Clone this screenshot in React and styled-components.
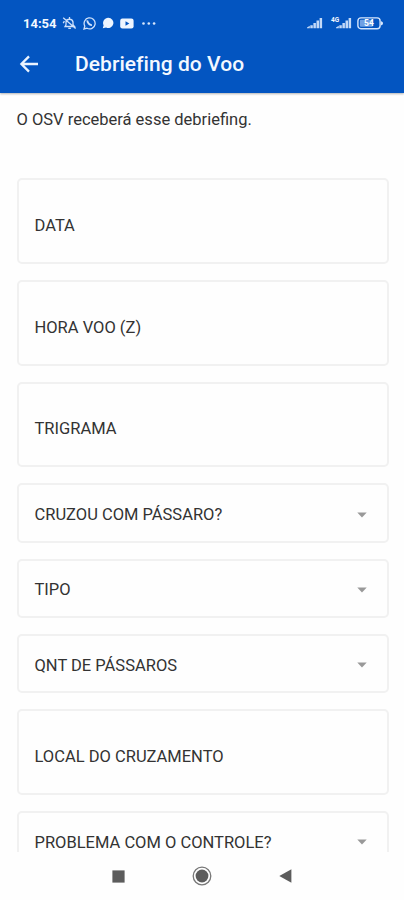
import styled, { createGlobalStyle } from "styled-components";

const fields = [
  { label: "DATA" },
  { label: "HORA VOO (Z)" },
  { label: "TRIGRAMA" },
  { label: "CRUZOU COM PÁSSARO?", select: true },
  { label: "TIPO", select: true },
  { label: "QNT DE PÁSSAROS", select: true },
  { label: "LOCAL DO CRUZAMENTO" },
  { label: "PROBLEMA COM O CONTROLE?", select: true },
];

const MutedBellIcon = () => (
  <svg width="15" height="14" viewBox="0 0 15 14" fill="none" stroke="#cfe1fb" strokeWidth="1.3">
    <path d="M3 10.5h9.5L11 8.8V6a3.6 3.6 0 0 0-7 0v2.8zM6.3 12.4h2.6M7.5 2.4V1M1.2 1.8l12.4 10.8M1.2 7.2l1.2-2" />
  </svg>
);

const WhatsAppIcon = () => (
  <svg width="13" height="14" viewBox="0 0 13 14" fill="none" stroke="#cfe1fb" strokeWidth="1.3">
    <path d="M1 13l.8-3A5.5 5.5 0 1 1 4 12.2z" />
    <path d="M4.5 4.4c-.6 2 2.3 5 4.4 4.5" strokeWidth="2" />
  </svg>
);

const ChatIcon = () => (
  <svg width="12" height="12" viewBox="0 0 12 12" fill="#eef5ff">
    <path d="M6.3.8a5.1 5.1 0 1 1-2.2 9.7L.8 11.2l.8-3A5.1 5.1 0 0 1 6.3.8z" />
  </svg>
);

const VideoIcon = () => (
  <svg width="14" height="11" viewBox="0 0 14 11">
    <rect x="0.2" y="0.5" width="13.4" height="10" rx="2.2" fill="#eef5ff" />
    <path d="M5.5 3.3 9.4 5.5 5.5 7.7z" fill="#0355c1" />
  </svg>
);

const DotsIcon = () => (
  <svg width="14" height="3" viewBox="0 0 14 3" fill="#d9e7fc">
    <circle cx="1.5" cy="1.5" r="1.3" />
    <circle cx="6.8" cy="1.5" r="1.3" />
    <circle cx="12.1" cy="1.5" r="1.3" />
  </svg>
);

const SignalIcon = () => (
  <svg width="16" height="12" viewBox="0 0 16 12" fill="#c3d9f8">
    <path d="M0 11.3V10.6l2.8-1.9v2.6zM3.3 8.2h2.5v3.1H3.3zM6.4 6h2.5v5.3H6.4zM9.5 3.6H12v7.7H9.5zM12.6 1h2.5v10.3h-2.5z" />
  </svg>
);

const BatteryIcon = () => (
  <svg width="27" height="13" viewBox="0 0 27 13">
    <rect x="0.9" y="0.9" width="22.2" height="10.8" rx="3" fill="none" stroke="#d6e6fd" strokeWidth="1.4" />
    <rect x="2.9" y="2.8" width="13" height="7" rx="1" fill="#6fa0e4" />
    <path d="M24 4.2c1.2.2 2 .8 2 2.1s-.8 1.9-2 2.1z" fill="#d6e6fd" />
    <text x="12" y="9.4" textAnchor="middle" fontSize="8.5" fontWeight="700" fill="#fff">
      54
    </text>
  </svg>
);

const BackIcon = () => (
  <svg width="20" height="18" viewBox="0 0 20 18" fill="none" stroke="#eaf3ff" strokeWidth="2.3">
    <path d="M19 9H2.8M10 1.4 2.4 9l7.6 7.6" />
  </svg>
);

const Field = ({ label, select }) => (
  <FieldBox $select={select}>
    <Label>{label}</Label>
    {select && (
      <svg width="10" height="6" viewBox="0 0 10 6">
        <path d="M0.3 0.4h9.4L5 5.5z" fill="#999" />
      </svg>
    )}
  </FieldBox>
);

const App = () => {
  return (
    <>
      <GlobalStyle />
      <Screen>
        <Header>
          <StatusBar>
            <StatusGroup>
              <Time>14:54</Time>
              <MutedBellIcon />
              <WhatsAppIcon />
              <ChatIcon />
              <VideoIcon />
              <Dots>
                <DotsIcon />
              </Dots>
            </StatusGroup>
            <SignalGroup>
              <SignalIcon />
              <Mobile>
                <Network>4G</Network>
                <SignalIcon />
              </Mobile>
              <BatteryIcon />
            </SignalGroup>
          </StatusBar>
          <Toolbar>
            <BackButton aria-label="Voltar">
              <BackIcon />
            </BackButton>
            <Title>Debriefing do Voo</Title>
          </Toolbar>
        </Header>
        <Content>
          <Notice>O OSV receberá esse debriefing.</Notice>
          <Form>
            {fields.map((field) => (
              <Field key={field.label} {...field} />
            ))}
          </Form>
        </Content>
        <NavBar>
          <svg width="13" height="13" viewBox="0 0 13 13">
            <rect x="0.4" y="0.4" width="12.2" height="12.2" fill="#5c5c5c" />
          </svg>
          <svg width="20" height="20" viewBox="0 0 20 20">
            <circle cx="10" cy="10" r="8.8" fill="none" stroke="#777" strokeWidth="1.3" />
            <circle cx="10" cy="10" r="6.4" fill="#5c5c5c" />
          </svg>
          <svg width="13" height="14" viewBox="0 0 13 14">
            <path d="M0.3 7 12.4 0.3v13.4z" fill="#5c5c5c" />
          </svg>
        </NavBar>
      </Screen>
    </>
  );
};

export default App;

const GlobalStyle = createGlobalStyle`
  * {
    box-sizing: border-box;
  }

  body {
    margin: 0;
    background: #fefefe;
    font-family: Roboto, "Liberation Sans", sans-serif;
  }

  svg {
    display: block;
    flex-shrink: 0;
  }
`;

const Screen = styled.div`
  display: flex;
  flex-direction: column;
  height: 900px;
  overflow: hidden;
`;

const Header = styled.header`
  flex-shrink: 0;
  height: 93px;
  background: #0355c1;
  color: #f3f8ff;
  box-shadow: 0 1px 2px rgba(0, 0, 0, 0.3);
`;

const StatusBar = styled.div`
  display: flex;
  justify-content: space-between;
  height: 36px;
  padding: 10px 20px 0 23px;
`;

const StatusGroup = styled.div`
  display: flex;
  align-items: center;
  gap: 6px;
  height: 26px;
`;

const Time = styled.span`
  width: 33px;
  font-size: 13px;
  font-weight: 700;
  white-space: nowrap;
`;

const Dots = styled.span`
  margin-left: 2px;
`;

const SignalGroup = styled.div`
  display: flex;
  align-items: center;
  gap: 5px;
  height: 26px;
`;

const Mobile = styled.div`
  display: flex;
  align-items: center;
`;

const Network = styled.span`
  align-self: flex-start;
  width: 8px;
  margin: 0 -3px 0 3px;
  font-size: 6.5px;
  line-height: 6px;
  font-weight: 700;
`;

const Toolbar = styled.div`
  display: flex;
  align-items: center;
  height: 56px;
  padding-left: 19px;
`;

const BackButton = styled.button`
  width: 56px;
  padding: 0;
  border: none;
  background: none;
  cursor: pointer;
`;

const Title = styled.h1`
  margin: 0;
  font-size: 21px;
  line-height: 28px;
  font-weight: 500;
  letter-spacing: 0.05px;
`;

const Content = styled.main`
  flex: 1;
  min-height: 0;
  padding: 16px 15px 0 16.5px;
  overflow: hidden;
`;

const Notice = styled.p`
  margin: 0;
  height: 69px;
  font-size: 16.5px;
  line-height: 21px;
  color: #333;
`;

const Form = styled.div`
  display: flex;
  flex-direction: column;
  gap: 16px;
`;

const FieldBox = styled.div`
  display: flex;
  align-items: center;
  justify-content: space-between;
  flex-shrink: 0;
  height: ${({ $select }) => ($select ? "59.3px" : "85.8px")};
  padding: ${({ $select }) => ($select ? "4px 20px 0 16px" : "10px 20px 0 16px")};
  border: 2px solid #f1f1f1;
  border-radius: 5px;

  svg {
    margin-bottom: 1px;
  }
`;

const Label = styled.span`
  font-size: 16.5px;
  line-height: 20px;
  color: #333;
`;

const NavBar = styled.nav`
  display: flex;
  align-items: center;
  justify-content: center;
  flex-shrink: 0;
  gap: 67px;
  height: 48px;
  background: #fefefe;
`;
